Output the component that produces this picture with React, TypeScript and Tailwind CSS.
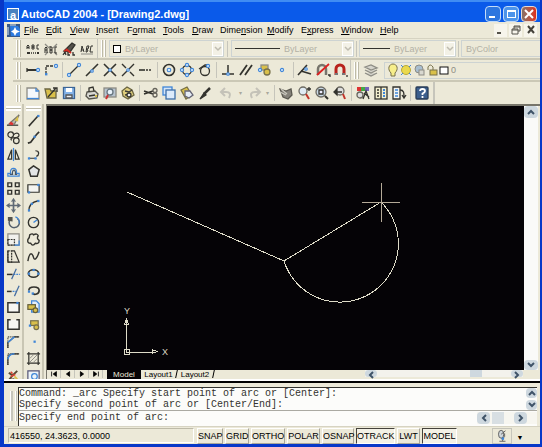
import React from "react";

type Tool = { name: string; art: React.ReactNode };

const K = "#33332e";
const B = "#3f86d8";
const Y = "#d9c04a";
const G = "#8d8c84";

function Icon({ children }: { children: React.ReactNode }) {
  return (
    <svg viewBox="0 0 16 16" className="size-4 shrink-0" fill="none" stroke={K} strokeWidth="1.3" aria-hidden="true">
      {children}
    </svg>
  );
}

const dot = (x: number, y: number, r = 1.6) => <circle cx={x} cy={y} r={r} fill="#d5e8fb" stroke={B} strokeWidth="1.1" />;
const pt = (x: number, y: number) => <rect x={x - 1} y={y - 1} width="2.4" height="2.4" fill={B} stroke="none" />;

const styleTools: Tool[] = [
  { name: "Spell check", art: <><path d="M2 8V5l1-1 1 1v3M2 6.500h2M7 4v4h2V6H7h2V4H7M14 4h-2v4h2" strokeWidth="1" /><path d="M2 12h3M12 12h2" strokeWidth="2" /><path d="M6 12h5" strokeDasharray="1 1" /></> },
  { name: "Find text", art: <><path d="M2 3l4 4M14 3l-4 4M2 14l3-3M14 14l-3-3" stroke={G} /><path d="M2 12V7l1-1 1 1v5M2 9h2M7 5v7h2V9H7h2V6H7M14 6h-2v6h2" strokeWidth="1" /></> },
  { name: "Edit text", art: <><path d="M3 10L11 2l3 2-5 7z" fill="#55534c" /><path d="M5 8l5 4M3 10l4-1" stroke="#d32a20" strokeWidth="2" /><path d="M2 14l2-3 1 3M7 11v3h2M12 11v3h2" /></> },
  { name: "Text style", art: <><path d="M2 11l1-6 2 6M2 9h3M7 11l1-6h2l-1 3H7l2 1-1 2H7M14 5h-2l-1 6h3" strokeWidth="1" /><path d="M2 13h12" strokeWidth="1" stroke={G} /></> },
];

const snapTools: (Tool | null)[] = [
  { name: "Temporary track", art: <><path d="M2 8h9" strokeWidth="2" />{dot(13, 8)}<path d="M2 6v4" /></> },
  { name: "Snap from", art: <><path d="M3 12V4h8" strokeDasharray="3 1" />{dot(13, 4)}{pt(3, 12)}</> },
  null,
  { name: "Endpoint", art: <><path d="M4 12l8-8" />{dot(13, 3)}{dot(3, 13)}</> },
  { name: "Midpoint", art: <><path d="M2 14L14 2" strokeWidth="1.6" />{dot(8, 9, 1.3)}</> },
  { name: "Intersection", art: <><path d="M2 2l12 12M14 2L2 14" strokeWidth="1.6" />{dot(8, 8, 1.3)}</> },
  { name: "Apparent intersection", art: <><path d="M2 2l4 4M10 10l4 4M14 2L2 14" strokeWidth="1.4" />{dot(8, 8, 1.3)}</> },
  { name: "Extension", art: <><path d="M1 8h6" strokeWidth="1.6" /><path d="M8 8h6" strokeDasharray="2 1" /></> },
  null,
  { name: "Center", art: <><circle cx="8" cy="8" r="5.500" strokeWidth="1.6" />{dot(8, 8, 1.800)}</> },
  { name: "Quadrant", art: <><circle cx="8" cy="8" r="4.500" />{dot(8, 3)}{dot(8, 13)}{dot(3, 8)}{dot(13, 8)}</> },
  { name: "Tangent", art: <><circle cx="8" cy="9" r="4.500" /><path d="M2 7l6-4 4 0" />{dot(11, 4)}</> },
  null,
  { name: "Perpendicular", art: <><path d="M2 12h12M8 3v9" strokeWidth="1.5" />{dot(8, 12, 1.3)}</> },
  { name: "Parallel", art: <path d="M2 13L9 3M7 13l7-10" strokeWidth="1.8" /> },
  { name: "Insert snap", art: <><rect x="5" y="3" width="7" height="5" fill={Y} stroke={G} /><circle cx="11" cy="10" r="3" fill={Y} stroke="#77704a" />{dot(4, 8)}</> },
  { name: "Node", art: dot(8, 8) },
  null,
  { name: "Nearest", art: <><path d="M1 13L10 3M4 9l10 3" strokeWidth="1.6" />{dot(9, 7, 1.3)}</> },
  { name: "Snap none", art: <><path d="M3 13V7a4 4 0 018 0v6" stroke="#77756c" strokeWidth="2.500" /><path d="M2 13L14 2" stroke="#d22" strokeWidth="1.800" /><path d="M13 13h2v2" /></> },
  { name: "Snap settings", art: <><path d="M3 13V7a4 4 0 018 0v6" stroke="#b8221c" strokeWidth="3" /><path d="M2 12h3M9 12h3" stroke="#777" strokeWidth="2" /><path d="M14 13v2" /></> },
];

const fileTools: (Tool | null)[] = [
  { name: "New", art: <><path d="M2 3h9l3 3v8H2z" fill="#f5f8fc" stroke={G} /><path d="M2 13.500h12" stroke={B} /><path d="M11 3v3h3" stroke={B} /></> },
  { name: "Open", art: <><path d="M2 4h5l1 2h5v7H4z" fill={Y} stroke="#6b6542" /><path d="M5 12L13 3M10 3h4v4" stroke={K} /></> },
  { name: "Save", art: <><rect x="2.500" y="2.500" width="11" height="11" fill="#86b5ea" stroke="#3c6596" /><path d="M5 3h6v4H5z" fill="#fff" stroke="none" /><path d="M5 10h6v3H5z" fill="#edf0f4" stroke="#555" /></> },
  null,
  { name: "Plot", art: <><path d="M3 7l8-1 3 3-1 4-8 1-3-3z" fill="#d7d7d2" stroke="#55534b" /><path d="M5 7V3l4-1 1 4M5 11l6-1" /><path d="M11 11h2" stroke={Y} strokeWidth="2" /></> },
  { name: "Preview", art: <><rect x="2" y="3" width="12" height="9" fill="#b7c3cf" stroke={G} /><circle cx="8" cy="7" r="3" fill="#e9f2fa" stroke="#66757f" /><path d="M6 10l-2 4" stroke="#c33" strokeWidth="2" /></> },
  { name: "Publish", art: <><path d="M2 6l5-4 5 3 2 5-6 4-5-3z" fill="#e0cf7c" stroke="#6b6542" /><path d="M5 6l4 1 3-2M5 10l5-1" stroke="#3b3b37" /><circle cx="9" cy="10" r="2" fill="#eee" /></> },
  null,
  { name: "Cut", art: <><path d="M1 6l9 3M1 9l9-3" strokeWidth="1.600" /><circle cx="12" cy="5.500" r="2" stroke="#66645c" /><circle cx="12" cy="10" r="2" stroke="#66645c" /></> },
  { name: "Copy", art: <><rect x="2" y="2" width="9" height="8" fill="#d4e5f8" stroke={B} /><rect x="5" y="5" width="9" height="9" fill="#dcebfb" stroke="#3d6fa8" /></> },
  { name: "Paste", art: <><path d="M2 5l6-3 5 8-6 4z" fill={Y} stroke="#776f46" /><path d="M6 6h5l3 4-4 3-4-2z" fill="#e6edf5" stroke="#667" /></> },
  { name: "Match properties", art: <><path d="M13 3L7 9" strokeWidth="2.500" /><path d="M7 8l-4 6 6-4z" fill={K} /></> },
];

const viewTools: (Tool | null)[] = [
  { name: "Pan", art: <><path d="M2 4l6 2 5-2 1 6-4 4-5-2z" fill="#85827a" stroke="#5a5850" /><path d="M2 7l6 3M3 4l6 5" stroke="#c9c7bd" /></> },
  { name: "Zoom realtime", art: <><circle cx="7" cy="6" r="4" fill="#e0ebf4" stroke="#6d6b63" /><path d="M10 9l3 5" stroke="#c2352b" strokeWidth="2" /><path d="M13 2v4M11 4h4" /></> },
  { name: "Zoom window", art: <><circle cx="7" cy="7" r="5" fill="#c9d9e6" stroke="#6d6b63" /><path d="M5 5h4v4H5z" fill="#eef" /><path d="M11 11l3 3" strokeWidth="2" /></> },
  { name: "Zoom previous", art: <><circle cx="8" cy="6" r="4" fill="#ddd" stroke="#6d6b63" /><path d="M11 9l2 5" stroke="#c2352b" strokeWidth="2" /><path d="M2 7l3-3v6zM5 7h5" fill={K} /></> },
  null,
  { name: "Properties", art: <><rect x="2" y="2" width="4" height="4" fill="#d33" stroke="none" /><rect x="6" y="2" width="4" height="4" fill="#4a4" stroke="none" /><rect x="10" y="2" width="4" height="4" fill="#76b" stroke="none" /><circle cx="5" cy="10" r="3" fill="#ddd" stroke="#66645c" /><path d="M8 14l3-8 3 8M9 8l5 4" /></> },
  { name: "Design center", art: <><rect x="2" y="2" width="12" height="12" fill="#f3efcf" /><path d="M8 2v12M4 5h2M4 8h2M4 11h2" /><path d="M10 5h2M10 8h2M10 11h2" stroke={B} strokeWidth="2" /></> },
  { name: "Tool palettes", art: <><path d="M2 2h7v12H2z" fill="#f5f5f0" /><path d="M4 5h3M4 8h3M4 11h3" stroke={B} /><path d="M9 5c4 0 4 3 4 7M11 10l2 3 2-3" /></> },
  null,
  { name: "Help", art: <><rect x="2" y="2" width="12" height="12" rx="1" fill="#3c5f8d" stroke="#293c57" /><path d="M6 6q0-2 2.500-2T11 6q0 1.500-2.500 2.500v1.500M8.500 11v2" stroke="#fff" strokeWidth="1.800" /></> },
];

const modifyTools: Tool[] = [
  { name: "Erase", art: <><path d="M1 13h12" stroke={K} /><path d="M3 12l3-3 8-7-5 10z" fill="#b9b7ad" stroke="#77756c" /><path d="M3 12l2-3 3 2-1 2z" fill="#d33" stroke="none" /><path d="M9 8l4-5v6z" fill={Y} stroke="none" /></> },
  { name: "Copy object", art: <><circle cx="5" cy="5" r="3" /><path d="M8 5c6-5 8 3 3 3S4 9 6 11" /><circle cx="11" cy="11.500" r="3" /></> },
  { name: "Mirror", art: <><path d="M6 3v10H2zM10 3v10h4z" /><path d="M8 1v14" stroke={B} /></> },
  { name: "Offset", art: <><path d="M2 13h12v-3h-3c2-7-8-7-6 0H2z" stroke={B} /><path d="M4 11h3c-1-6 4-6 3 0h2" stroke="#44566a" /></> },
  { name: "Array", art: <path d="M2 2h4v4H2zM10 2h4v4h-4zM2 10h4v4H2zM10 10h4v4h-4z" strokeWidth="1.500" /> },
  { name: "Move", art: <><path d="M8 2v12M2 8h12" stroke="#5f6a75" strokeWidth="1.800" /><path d="M6 4l2-3 2 3M6 12l2 3 2-3M4 6L1 8l3 2M12 6l3 2-3 2" stroke="#5f6a75" /></> },
  { name: "Rotate", art: <><path d="M5 4a5.500 5.500 0 107-.5" stroke="#55606b" strokeWidth="1.600" /><path d="M2 6V2h5v5z" fill="#55534b" stroke="none" /><path d="M10 2a6 6 0 014 7" stroke={B} /></> },
  { name: "Scale", art: <><path d="M2 2h12v12H2z" fill="#f1f1ed" stroke={G} /><path d="M2 8h7v6H2z" strokeDasharray="2 1" /><path d="M14 9v5H9" stroke={B} /></> },
  { name: "Stretch", art: <><path d="M2 2h4v12H2z" strokeDasharray="2 1" /><path d="M6 2l3 0 5 12H2V2" /></> },
  { name: "Trim", art: <><path d="M1 9h6" strokeWidth="1.600" /><path d="M8 9h7" stroke={B} strokeDasharray="2 1" /><path d="M6 14L11 3" stroke="#456da0" /></> },
  { name: "Extend", art: <><path d="M1 9h5" strokeWidth="1.600" /><path d="M7 9h4" stroke={B} strokeDasharray="2 1" /><path d="M9 14l5-11" stroke="#456da0" /></> },
  { name: "Break at point", art: <><path d="M2 3h12v10H2z" fill="#f7f7f3" strokeWidth="1.600" />{pt(12, 3)}</> },
  { name: "Break", art: <path d="M5 3H2v10h12V3h-3" fill="#f7f7f3" strokeWidth="1.600" /> },
  { name: "Chamfer", art: <><path d="M2 15V3h12" strokeDasharray="1 1" /><path d="M2 15V9l7-6h5" /><path d="M2 9l7-6" stroke={B} strokeWidth="1.600" /></> },
  { name: "Fillet", art: <><path d="M2 15V3h12" strokeDasharray="1 1" /><path d="M2 15V9q0-6 6-6h6" /><path d="M2 9q1-6 7-6" stroke={B} strokeWidth="1.600" /></> },
  { name: "Explode", art: <><path d="M3 5l4 3 5-5M7 8l-4 5 5-1 4 2" stroke="#594a33" strokeWidth="2" /><path d="M5 9l5-2M5 4l2 2" stroke="#d43" strokeWidth="1.600" /><path d="M9 9l3 3" stroke={Y} strokeWidth="2" /></> },
];

const drawTools: Tool[] = [
  { name: "Line", art: <><path d="M3 14L13 3" strokeWidth="1.600" />{pt(13, 3)}</> },
  { name: "Construction line", art: <><path d="M2 14l3-1 6-8 3-3" strokeWidth="1.800" />{pt(9, 7)}</> },
  { name: "Polyline", art: <><path d="M3 12h8M10 4c5 0 4 5 1 6" />{pt(3, 12)}{pt(10, 12)}</> },
  { name: "Polygon", art: <path d="M8 2l6 4-2 7H5L3 6z" fill="#e4e6e6" strokeWidth="1.600" /> },
  { name: "Rectangle", art: <><path d="M2 4h12v8H2z" fill="#f5f5f1" />{pt(3, 12)}{pt(13, 4)}</> },
  { name: "Arc", art: <><path d="M3 14Q3 5 13 3" strokeWidth="1.500" />{pt(3, 13)}{pt(6, 6)}{pt(13, 3)}</> },
  { name: "Circle", art: <><circle cx="8" cy="8" r="5.500" strokeWidth="1.500" /><path d="M8 8l4-3" stroke={B} strokeWidth="1.500" /></> },
  { name: "Revision cloud", art: <path d="M4 3q3-2 4 0 4-2 5 1-2 3 1 5 0 4-4 3-3 4-5 0-4 0-3-4 2-2 2-5z" strokeWidth="1.500" /> },
  { name: "Spline", art: <path d="M2 13C4 1 7 5 8 9s4 1 6-6" strokeWidth="1.500" /> },
  { name: "Ellipse", art: <><ellipse cx="8" cy="8" rx="5.500" ry="4" strokeWidth="1.800" />{pt(8, 4)}{pt(13, 8)}{pt(3, 8)}</> },
  { name: "Ellipse arc", art: <><path d="M3 8c0-5 11-5 11 0 0 4-5 5-7 3" strokeWidth="1.800" />{pt(3, 9)}{pt(7, 11)}</> },
  { name: "Insert block", art: <><path d="M6 1h5l3 3v9H6z" fill="#e4edf6" stroke={B} /><rect x="2" y="5" width="8" height="5" fill={Y} stroke="#66603c" /><circle cx="10" cy="11" r="2.500" fill={Y} stroke="#66603c" /></> },
  { name: "Make block", art: <><rect x="5" y="4" width="8" height="5" fill={Y} stroke="#77704a" /><circle cx="11" cy="11" r="2.500" fill={Y} stroke="#77704a" />{pt(4, 9)}</> },
  { name: "Point", art: pt(9, 8) },
  { name: "Hatch", art: <><path d="M1 3h14M1 13h14M3 1v14M13 1v14" /><path d="M4 8l4-4M4 12l8-8M8 12l4-4" strokeWidth="1" stroke={G} /></> },
  { name: "Region", art: <><path d="M2 3h12v10H2z" fill="#edf3f8" stroke="#557" /><circle cx="9" cy="9" r="3" stroke={B} /></> },
];

const menus: [string, string, string, string][] = [
  ["", "F", "ile", "w-[22px]"], ["", "E", "dit", "w-6"], ["", "V", "iew", "w-[26px]"], ["", "I", "nsert", "w-[31px]"],
  ["F", "o", "rmat", "w-9"], ["", "T", "ools", "w-[29px]"], ["", "D", "raw", "w-7"], ["Dime", "n", "sion", "w-[47px]"],
  ["", "M", "odify", "w-[34px]"], ["E", "x", "press", "w-10"], ["", "W", "indow", "w-[39px]"], ["", "H", "elp", "w-6"],
];

const modes: [string, boolean, string][] = [
  ["SNAP", false, "w-[26px]"], ["GRID", false, "w-6"], ["ORTHO", false, "w-[34px]"], ["POLAR", false, "w-[33px]"],
  ["OSNAP", false, "w-8"], ["OTRACK", true, "w-[39px]"], ["LWT", false, "w-[23px]"], ["MODEL", true, "w-[35px]"],
];

function Grip() {
  return (
    <span className="mx-[3px] flex h-[17px] w-[5px] shrink-0 gap-px">
      <span className="w-0.5 border-l border-white bg-[#bdbaa8]" />
      <span className="w-0.5 border-l border-white bg-[#bdbaa8]" />
    </span>
  );
}

function Sep() {
  return <span className="mx-[2px] h-4 w-px shrink-0 bg-[#c6c5bb]" />;
}

function ToolStrip({ items }: { items: (Tool | null)[] }) {
  return (
    <>
      {items.map((t, i) =>
        t ? (
          <button key={t.name} aria-label={t.name} className="grid h-5 w-[18px] shrink-0 place-items-center">
            <Icon>{t.art}</Icon>
          </button>
        ) : (
          <Sep key={i} />
        ),
      )}
    </>
  );
}

function Column({ items }: { items: Tool[] }) {
  return (
    <div className="flex w-5 shrink-0 flex-col items-center overflow-hidden border-r-2 border-[#c9c6b4] pt-[2px]">
      <span className="mb-px h-[5px] w-[15px] shrink-0 border-y-2 border-white bg-[#bdbaa8]" />
      {items.map((t) => (
        <button key={t.name} aria-label={t.name} className="grid h-[17px] w-full shrink-0 place-items-center">
          <svg viewBox="0 0 16 16" className="size-[15px]" fill="none" stroke={K} strokeWidth="1.3" aria-hidden="true">
            {t.art}
          </svg>
        </button>
      ))}
    </div>
  );
}

function Chevron({ dir, className }: { dir: "up" | "down" | "left" | "right"; className: string }) {
  const d = { up: "M2 7l3-3 3 3", down: "M2 3l3 3 3-3", left: "M7 2L4 5l3 3", right: "M3 2l3 3-3 3" }[dir];
  return (
    <button aria-label={"Scroll " + dir} className={"grid shrink-0 place-items-center rounded-sm bg-[#ced8df] " + className}>
      <svg viewBox="0 0 10 10" className="size-2.5" fill="none" stroke="#3f5368" strokeWidth="2" aria-hidden="true">
        <path d={d} />
      </svg>
    </button>
  );
}

function Combo({ label, text, line, className }: { label: string; text: string; line?: string; className: string }) {
  return (
    <div className={"flex h-[17px] items-center border border-[#cdd3d2] pl-[3px] " + className}>
      {line ? <span className={"h-px shrink-0 bg-[#33332e] " + line} /> : null}
      {label === "Layer color" ? <span className="size-2 shrink-0 border border-black bg-white" /> : null}
      <select aria-label={label} disabled className="ml-1 min-w-0 flex-1 appearance-none bg-transparent text-[9px] leading-3 text-[#b3b1a6]">
        <option>{text}</option>
      </select>
      <span className="grid h-[14px] w-[11px] shrink-0 place-items-center border border-white bg-[#f3f1e6]">
        <svg viewBox="0 0 8 8" className="size-2" fill="none" stroke="#bfbcb0" strokeWidth="1.500" aria-hidden="true">
          <path d="M1 2l3 3 3-3" />
        </svg>
      </span>
    </div>
  );
}

function Slant() {
  return <span className="h-2 w-px shrink-0 -skew-x-12 bg-black" />;
}

const rowLine = "ml-[9px] flex items-center border-b-2 border-[#cbc8b6] shrink-0";

export default function App() {
  return (
    <div className="flex h-screen flex-col overflow-hidden border-r-2 border-b-3 border-l-4 border-[#0838c8] bg-[#ece9d8] font-['Liberation_Sans',sans-serif] text-[9px] leading-3 text-black">
      <header className="flex h-[22px] shrink-0 items-center border-t-2 border-[#3f8cf3] bg-[#0a5aea] pt-1 pr-[3px] pl-[3px]">
        <span className="grid size-3 place-items-center border border-white bg-[#4a83c0] text-[11px] leading-3 font-bold text-white">a</span>
        <h1 className="ml-0.5 flex-1 text-[11px] leading-4 font-bold text-white">AutoCAD 2004 - [Drawing2.dwg]</h1>
        <div className="flex gap-0.5 text-white">
          <button aria-label="Minimize" className="flex size-4 items-end rounded-sm border border-[#c5dcf8] bg-[#2d76df] p-[3px]"><span className="h-0.5 w-1.5 bg-white" /></button>
          <button aria-label="Maximize" className="grid size-4 place-items-center rounded-sm border border-[#c5dcf8] bg-[#4d94ea]"><span className="h-2 w-[9px] border border-t-2 border-white" /></button>
          <button aria-label="Close" className="grid size-4 place-items-center rounded-sm border border-[#e8d8d3] bg-linear-to-r from-[#847068] to-[#dd2a17]">
            <svg viewBox="0 0 10 10" className="size-2.5" stroke="white" strokeWidth="2" aria-hidden="true"><path d="M1 1l8 8M9 1L1 9" /></svg>
          </button>
        </div>
      </header>

      <nav className="flex h-4 shrink-0 items-center pl-[3px]">
        <svg viewBox="0 0 13 13" className="mr-[2px] size-[13px]" aria-hidden="true">
          <rect width="13" height="13" fill="#36588a" />
          <path d="M3 2h8l2 3v7H4z" fill="#2c7be0" />
          <path d="M1 3v8M3 1h6" stroke="#dce8f5" />
          <path d="M8 3l1.500 3L13 7.500 9.500 9 8 12 6.500 9 4 7.500 6.500 6z" fill="white" />
        </svg>
        {menus.map(([a, u, z, w]) => (
          <button key={a + u + z} className={"shrink-0 pl-0.5 text-left whitespace-nowrap " + w}>
            {a}<span className="underline">{u}</span>{z}
          </button>
        ))}
        <div className="ml-auto flex gap-0.5 pr-[3px]">
          <button aria-label="Minimize drawing" className="flex size-[13px] items-end bg-[#f7f5ec] p-[3px]"><span className="h-0.5 w-1 bg-[#55534b]" /></button>
          <button aria-label="Restore drawing" className="grid size-[13px] place-items-center bg-[#f7f5ec]"><svg viewBox="0 0 10 10" className="size-2.5" fill="none" stroke="#55534b" aria-hidden="true"><path d="M3 4V1h6v5H7M3 2h6M1 4h6v5H1zM1 5h6" /></svg></button>
          <button aria-label="Close drawing" className="grid size-[13px] place-items-center bg-[#f7f5ec]"><svg viewBox="0 0 10 10" className="size-2.5" stroke="#44423b" strokeWidth="2" aria-hidden="true"><path d="M2 1l6 7M8 1L2 8" /></svg></button>
        </div>
      </nav>

      <div className={rowLine + " h-[22px] border-t border-t-[#d6d3c2]"}>
        <Grip />
        <span className="flex w-[73px]"><ToolStrip items={styleTools} /></span>
        <span className="h-5 w-px bg-[#c6c5bb]" />
        <Grip />
        <Combo label="Layer color" text="ByLayer" className="w-[115px] shrink-0" />
        <span className="mx-[3px] h-4 w-px bg-[#c6c5bb]" />
        <Combo label="Linetype" text="ByLayer" line="w-[45px]" className="w-[123px] shrink-0" />
        <span className="mx-0.5 h-4 w-px bg-[#c6c5bb]" />
        <Combo label="Lineweight" text="ByLayer" line="w-[27px]" className="w-[97px] shrink-0" />
        <span className="mx-0.5 h-4 w-px bg-[#c6c5bb]" />
        <div className="flex h-[17px] flex-1 items-center border border-r-0 border-[#cdd3d2] pl-1">
          <select aria-label="Plot style" disabled className="min-w-0 flex-1 appearance-none bg-transparent text-[9px] leading-3 text-[#b3b1a6]"><option>ByColor</option></select>
        </div>
      </div>

      <div className={rowLine + " h-[22px]"}>
        <Grip />
        <ToolStrip items={snapTools} />
        <span className="h-5 w-px bg-[#c6c5bb]" />
        <Grip />
        <button aria-label="Layer manager" className="mr-1 grid h-5 w-[18px] place-items-center">
          <Icon><path d="M2 5l6-2 6 3-6 2zM2 8l6 3 6-3M2 11l6 3 6-3" fill="#d5d4cb" stroke={G} /></Icon>
        </button>
        <div className="flex h-[17px] flex-1 items-center border border-r-0 border-[#cdd3d2]">
          <svg viewBox="0 0 64 16" className="h-4 w-16" fill="none" stroke="#77704a" aria-hidden="true">
            <path d="M6 11C2 7 4 2 8 2s6 5 2 9v3H6z" fill="#f7ee8a" />
            <circle cx="21" cy="8" r="4.500" fill="#ead94d" stroke="#b9a93a" />
            <path d="M16 3l2 2M26 3l-2 2M16 13l2-2M26 13l-2-2" stroke={B} />
            <circle cx="34" cy="7" r="4" fill="#a8bed0" stroke={G} />
            <rect x="34" y="8" width="5" height="5" fill="#d9d8d0" stroke={G} />
            <path d="M43 8V5q2-4 5 0v4" />
            <rect x="45" y="8" width="7" height="5" fill={Y} />
            <rect x="55" y="5" width="8" height="7" fill="white" stroke="#111" />
          </svg>
          <select aria-label="Layer" disabled className="ml-0.5 min-w-0 flex-1 appearance-none bg-transparent text-[9px] leading-3 text-[#8f8d83]"><option>0</option></select>
        </div>
      </div>

      <div className="flex h-[22px] shrink-0 items-center pl-[9px]">
        <div className="flex h-full items-center border-r-2 border-[#c6c5bb]">
          <Grip />
          <ToolStrip items={fileTools} />
          <span className="w-1" />
          <button aria-label="Undo" className="grid size-[18px] place-items-center"><Icon><path d="M6 3L2 7l4 4M2 7h5q6 0 3 6" stroke="#c4c2b8" strokeWidth="2" /></Icon></button>
          <button aria-label="Undo list" className="w-[9px] text-[6px] text-[#a9a79c]">▾</button>
          <button aria-label="Redo" className="grid size-[18px] place-items-center"><Icon><path d="M10 3l4 4-4 4M14 7H9q-6 0-3 6" stroke="#c4c2b8" strokeWidth="2" /></Icon></button>
          <button aria-label="Redo list" className="w-[9px] text-[6px] text-[#a9a79c]">▾</button>
          <Sep />
          <ToolStrip items={viewTools} />
          <span className="w-0.5" />
        </div>
      </div>

      <main className="flex min-h-0 flex-1">
        <Column items={modifyTools} />
        <Column items={drawTools} />
        <section className="ml-0.5 flex min-w-0 flex-1 flex-col border-t-2 border-l border-[#77756a]">
          <div className="flex min-h-0 flex-1">
            <svg className="h-full min-w-0 flex-1 bg-[#050306]" fill="none" stroke="#dedbc8" shapeRendering="crispEdges" role="img" aria-label="Two lines and an arc">
              <path d="M80 86L237 155L334 96" />
              <path d="M237 155A58.500 58.500 0 1 0 334 96" />
              <path d="M315 96.500h38M334.500 77v39" stroke="#b5aa98" strokeWidth="1" />
              <path d="M79.500 214v32h25M77 243h5v5h-5zM77.500 218l2-5 2 5zM105 243.500l5 2-5 2z" />
              <g fill="#dedbc8" stroke="none" className="text-[9px]">
                <text x="77" y="208">Y</text>
                <text x="115" y="249">X</text>
              </g>
            </svg>
            <div className="flex w-[14px] shrink-0 flex-col justify-between bg-[#fafaf8]">
              <Chevron dir="up" className="h-3 w-full" />
              <Chevron dir="down" className="h-2.5 w-full" />
            </div>
            <span className="w-0.5" />
          </div>
          <div className="flex h-[9px] shrink-0 items-start text-[8px] leading-[9px]">
            {["M3 2v6M9 2L5 5l4 3z", "M8 2L4 5l4 3z", "M4 2l4 3-4 3z", "M3 2l4 3-4 3zM9 2v6"].map((d, i) => (
              <button key={d} aria-label={["First tab", "Previous tab", "Next tab", "Last tab"][i]} className="grid h-2 w-[14px] place-items-center border-r border-[#c6c5bb]">
                <svg viewBox="0 0 12 10" className="h-2 w-3" fill="black" stroke="black" aria-hidden="true"><path d={d} /></svg>
              </button>
            ))}
            <button className="ml-1 h-[9px] w-[34px] bg-[#050306] text-[#ece9d8]">Model</button>
            <button className="h-[9px] w-[35px]">Layout1</button>
            <Slant />
            <button className="h-[9px] w-[36px]">Layout2</button>
            <Slant />
            <div className="mr-[17px] ml-auto flex h-[7px] w-[158px] justify-between bg-[#f3f2ec]">
              <Chevron dir="left" className="h-[7px] w-3" />
              <span className="ml-16 w-3 bg-[#ced8df]" />
              <Chevron dir="right" className="h-[7px] w-3" />
            </div>
          </div>
        </section>
      </main>

      <div className="h-1 shrink-0 border-t-2 border-b-2 border-t-white border-b-black" />

      <section className="flex h-[43px] shrink-0 gap-px pt-1 pr-[3px] pl-[3px]">
        <span className="mt-1 flex h-[30px] w-2.5 shrink-0 gap-0.5 pl-[3px]">
          <span className="w-[3px] border-l border-white bg-[#c6c5bb]" />
          <span className="w-[3px] border-l border-white bg-[#c6c5bb]" />
        </span>
        <div className="min-w-0 flex-1 border-t border-l border-[#33332e] bg-[#fcfcfa] font-['Liberation_Mono',monospace] text-[10px] text-[#33332e]">
          <div className="flex h-[23px] border-b border-[#aaa9a2]">
            <div className="flex flex-1 flex-col justify-end leading-[11px] whitespace-pre">
              <p>Command: _arc Specify start point of arc or [Center]:</p>
              <p>Specify second point of arc or [Center/End]:</p>
            </div>
            <div className="flex w-[11px] flex-col justify-between">
              <Chevron dir="up" className="h-2.5 w-full" />
              <Chevron dir="down" className="h-2.5 w-full" />
            </div>
          </div>
          <div className="flex items-center">
            <label htmlFor="cmd" className="leading-[14px]">Specify end point of arc:</label>
            <input id="cmd" className="h-[14px] min-w-0 flex-1 bg-transparent outline-none" />
            <div className="flex w-[60px] gap-0.5 bg-[#f7f6f0]">
              <Chevron dir="left" className="h-3 w-[13px]" />
              <span className="h-3 w-3 bg-[#d8dfe3]" />
              <span className="w-1.5" />
              <Chevron dir="right" className="h-3 w-[13px]" />
            </div>
          </div>
        </div>
      </section>

      <footer className="flex h-[18px] shrink-0 items-center border-t border-[#d6d3c2] pl-1">
        <output className="h-[15px] w-[186px] border border-[#bdbaa8] border-r-white border-b-white pl-px leading-[14px]">416550, 24.3623, 0.0000</output>
        <div className="ml-[3px] flex gap-0.5">
          {modes.map(([m, on, w]) => (
            <button key={m} aria-pressed={on} className={"grid h-4 place-items-center border " + w + (on ? " border-[#44423b] border-r-white border-b-white bg-[#f3f1e6]" : " border-white border-r-[#aaa79a] border-b-[#aaa79a]")}>{m}</button>
          ))}
        </div>
        <button aria-label="Communication center" className="ml-auto grid h-4 w-5 place-items-center border border-[#c6c5bb]">
          <svg viewBox="0 0 16 16" className="size-[14px]" fill="none" stroke="#555" aria-hidden="true">
            <path d="M7 8l2 6M5 14h7" />
            <ellipse cx="7" cy="6" rx="3" ry="4.500" fill="#cfd6da" />
            <path d="M7 6l5-4M11 5q1 4-2 6" />
            <circle cx="9" cy="11" r="1.500" fill={B} stroke="none" />
          </svg>
        </button>
        <button aria-label="Status bar menu" className="mr-3 w-4 pt-1 text-[7px] leading-3">▼</button>
      </footer>
    </div>
  );
}
